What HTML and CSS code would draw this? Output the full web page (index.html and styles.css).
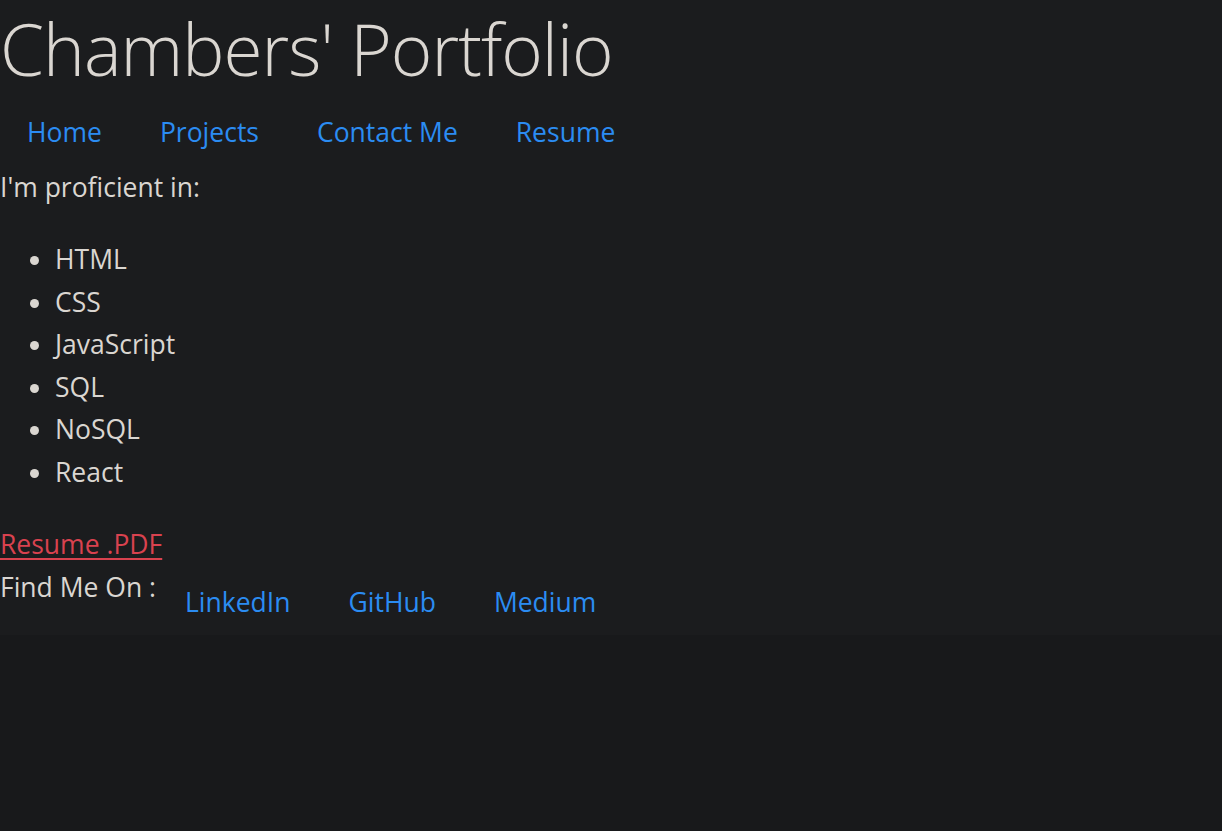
FILE: index.html
```html
<!DOCTYPE html>
<html lang="en">
<head>
<meta charset="utf-8">
<title>Chambers' Portfolio</title>
<link rel="stylesheet" href="styles.css">
</head>
<body>
<div class="page">
  <header class="header">
    <h1 class="title">Chambers' Portfolio</h1>
    <nav class="nav">
      <a class="nav-link" href="#">Home</a>
      <a class="nav-link" href="#">Projects</a>
      <a class="nav-link" href="#">Contact Me</a>
      <a class="nav-link" href="#">Resume</a>
    </nav>
  </header>
  <main class="main">
    <p class="intro">I'm proficient in:</p>
    <ul class="skills">
      <li>HTML</li>
      <li>CSS</li>
      <li>JavaScript</li>
      <li>SQL</li>
      <li>NoSQL</li>
      <li>React</li>
    </ul>
    <a class="pdf" href="#">Resume .PDF</a>
  </main>
  <footer class="footer">
    <span class="find">Find Me On :</span>
    <nav class="social">
      <a class="nav-link" href="#">LinkedIn</a>
      <a class="nav-link" href="#">GitHub</a>
      <a class="nav-link" href="#">Medium</a>
    </nav>
  </footer>
</div>
</body>
</html>
```
FILE: styles.css
```css
html {
  background: #18191b;
}
body {
  margin: 0;
  background: #18191b;
  color: #dad6d1;
  font-family: "Open Sans", "Noto Sans", sans-serif;
  font-size: 26.5px;
  line-height: 43px;
}
.page {
  background: #1b1c1e;
  padding-bottom: 11px;
}
.title {
  margin: 0;
  font-size: 71px;
  font-weight: 300;
  line-height: 97px;
  letter-spacing: -1px;
  color: #dad6d1;
}
.nav {
  display: flex;
  padding: 14px 0 12px;
}
.nav-link {
  color: #2b8cf2;
  text-decoration: none;
  padding: 0 29px;
}
.nav .nav-link:first-child {
  padding-left: 27px;
}
.intro {
  margin: 0 0 29px;
}
.skills {
  margin: 0 0 29px;
  padding-left: 55px;
}
.skills li {
  line-height: 42.6px;
}
.pdf {
  display: block;
  width: max-content;
  color: #d9424f;
  text-decoration: underline;
  text-decoration-thickness: 2px;
  text-underline-offset: 4px;
}
.footer {
  display: flex;
  align-items: flex-start;
}
.footer .social {
  display: flex;
  padding: 15px 0 0;
}
```
